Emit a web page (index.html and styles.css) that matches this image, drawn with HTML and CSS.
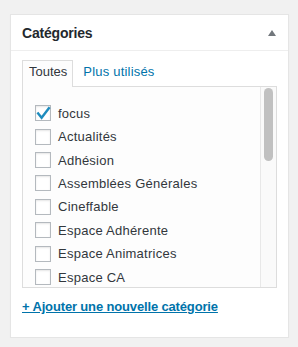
FILE: index.html
```html
<!DOCTYPE html>
<html lang="fr">
<head>
    <meta charset="UTF-8">
    <meta name="viewport" content="width=device-width, initial-scale=1.0">
    <title>Catégories</title>
    <link rel="stylesheet" href="styles.css">
</head>
<body>
    <div class="postbox">
        <div class="postbox-header">
            <h2>Catégories</h2>
            <span class="toggle-indicator"></span>
        </div>
        <div class="inside">
            <ul class="category-tabs">
                <li class="tabs">Toutes</li>
                <li><a href="#">Plus utilisés</a></li>
            </ul>
            <div class="tabs-panel">
                <ul class="categorychecklist">
                    <li><label><span class="check"><input type="checkbox" checked><svg class="tick" viewBox="0 0 16 16"><polyline points="2.4,7.6 6.6,12.8 14.6,2.2"/></svg></span>focus</label></li>
                    <li><label><span class="check"><input type="checkbox"></span>Actualités</label></li>
                    <li><label><span class="check"><input type="checkbox"></span>Adhésion</label></li>
                    <li><label><span class="check"><input type="checkbox"></span>Assemblées Générales</label></li>
                    <li><label><span class="check"><input type="checkbox"></span>Cineffable</label></li>
                    <li><label><span class="check"><input type="checkbox"></span>Espace Adhérente</label></li>
                    <li><label><span class="check"><input type="checkbox"></span>Espace Animatrices</label></li>
                    <li><label><span class="check"><input type="checkbox"></span>Espace CA</label></li>
                </ul>
                <div class="scrollbar"><div class="scrollbar-thumb"></div></div>
            </div>
            <a href="#" class="taxonomy-add-new">+ Ajouter une nouvelle catégorie</a>
        </div>
    </div>
</body>
</html>
```

FILE: styles.css
```css
body {
    font-family: "Liberation Sans", Arial, sans-serif;
    font-size: 13px;
    color: #32373c;
    background-color: #f1f1f1;
    margin: 0;
    padding: 14px 0 0 10px;
}
.postbox {
    width: 279px;
    box-sizing: border-box;
    background-color: #fff;
    border: 1px solid #e5e5e5;
    box-shadow: 0 1px 1px rgba(0, 0, 0, 0.04);
}
.postbox-header {
    display: flex;
    align-items: center;
    justify-content: space-between;
    height: 35px;
    padding: 0 12px 0 11px;
    border-bottom: 1px solid #eee;
}
.postbox-header h2 {
    margin: 0;
    font-size: 14px;
    font-weight: bold;
    letter-spacing: -0.2px;
    line-height: 35px;
    color: #23282d;
    padding-top: 1px;
}
.toggle-indicator {
    width: 0;
    height: 0;
    border-left: 4px solid transparent;
    border-right: 4px solid transparent;
    border-bottom: 6px solid #72777c;
    margin-top: 1px;
}
.inside {
    padding: 9px 11px 20px 11px;
}
.category-tabs {
    display: flex;
    gap: 3px;
    list-style: none;
    margin: 0 0 -1px 0;
    padding: 0;
    position: relative;
    z-index: 1;
}
.category-tabs li {
    height: 27px;
    box-sizing: border-box;
    padding: 2px 5px 0 6px;
    line-height: 18px;
    border: 1px solid transparent;
    border-bottom: none;
}
.category-tabs li.tabs {
    border-color: #ddd;
    background-color: #fdfdfd;
}
.category-tabs a {
    color: #0073aa;
    text-decoration: none;
    letter-spacing: 0.2px;
}
.tabs-panel {
    position: relative;
    height: 200px;
    overflow: hidden;
    border: 1px solid #ddd;
    background-color: #fdfdfd;
}
.scrollbar {
    position: absolute;
    top: 0;
    right: 0;
    bottom: 0;
    width: 15px;
    background-color: #fafafa;
    border-left: 1px solid #e8e8e8;
}
.scrollbar-thumb {
    margin: 1px 3px 0 3px;
    height: 73px;
    border-radius: 5px;
    background-color: #c1c1c1;
}
.categorychecklist {
    list-style: none;
    margin: 0;
    padding: 14.6px 0 0 12px;
}
.categorychecklist li {
    height: 23.4px;
}
.categorychecklist label {
    display: flex;
    align-items: center;
    height: 100%;
    white-space: nowrap;
    letter-spacing: 0.25px;
}
.check {
    position: relative;
    width: 16px;
    height: 16px;
    margin-right: 7px;
    flex-shrink: 0;
}
.check input {
    appearance: none;
    -webkit-appearance: none;
    display: block;
    margin: 0;
    width: 16px;
    height: 16px;
    box-sizing: border-box;
    border: 1px solid #b4b9be;
    background-color: #fff;
    box-shadow: inset 0 1px 2px rgba(0, 0, 0, 0.1);
}
.tick {
    position: absolute;
    left: 0;
    top: 0;
    width: 16px;
    height: 16px;
    display: none;
}
.tick polyline {
    fill: none;
    stroke: #1e8cbe;
    stroke-width: 2.4;
}
.check input:checked + .tick {
    display: block;
}
.taxonomy-add-new {
    display: inline-block;
    margin-top: 8px;
    line-height: 21px;
    font-weight: bold;
    letter-spacing: -0.15px;
    color: #0073aa;
    text-decoration: underline;
}
```
